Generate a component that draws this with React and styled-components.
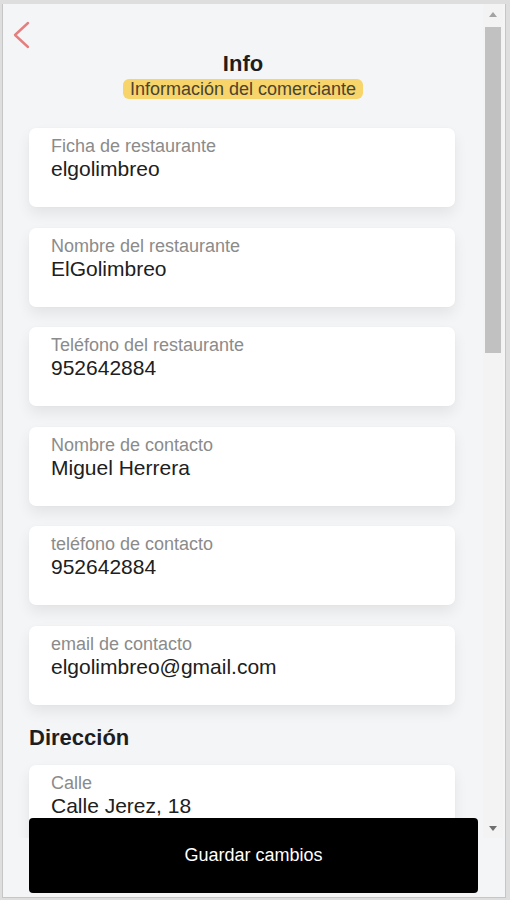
import React from "react";
import styled, { createGlobalStyle } from "styled-components";

const GlobalStyle = createGlobalStyle`
  body {
    margin: 0;
    background: #dedede;
    font-family: "Liberation Sans", Arial, sans-serif;
  }
`;

const Frame = styled.div`
  position: relative;
  box-sizing: border-box;
  margin: 4px 0 0 2px;
  width: 504px;
  height: 894px;
  background: #f4f5f7;
  border: 1px solid #c6c6c6;
  border-top: none;
  overflow: hidden;
`;

const ScrollArea = styled.div`
  display: flex;
  height: 834px;
  padding-right: 2px;
`;

const Content = styled.div`
  flex: 1;
  min-width: 0;
  overflow: hidden;
`;

const BackButton = styled.button`
  display: block;
  margin: 17px 0 0 8px;
  padding: 0;
  border: none;
  background: none;
  cursor: pointer;

  svg {
    display: block;
  }
`;

const Title = styled.h1`
  margin: 0;
  font-size: 22px;
  line-height: 25px;
  font-weight: 700;
  text-align: center;
  color: #1e1e1e;
`;

const BadgeRow = styled.div`
  display: flex;
  justify-content: center;
  margin-top: 3px;
`;

const Badge = styled.span`
  padding: 0 7px;
  font-size: 18px;
  line-height: 20px;
  color: #4b4330;
  background: #f7d56a;
  border-radius: 6px;
`;

const Fields = styled.div`
  margin-top: 29px;
  padding: 0 28px 0 26px;
`;

const Card = styled.div`
  box-sizing: border-box;
  height: 79px;
  margin-bottom: 20.5px;
  padding: 8px 22px 0;
  background: #fff;
  border-radius: 7px;
  box-shadow: 0 7px 14px rgba(0, 0, 0, 0.07), 0 0 2px rgba(0, 0, 0, 0.03);
`;

const Label = styled.div`
  font-size: 18px;
  line-height: 21px;
  color: #8b8b8b;
`;

const Value = styled.div`
  font-size: 21px;
  line-height: 24px;
  color: #202020;
`;

const Section = styled.h2`
  margin: 0 0 15px;
  font-size: 22px;
  line-height: 25px;
  font-weight: 700;
  color: #1e1e1e;
`;

const Scrollbar = styled.div`
  display: flex;
  flex-direction: column;
  width: 20px;
  background: #f3f3f3;
`;

const ScrollButton = styled.div`
  display: flex;
  align-items: center;
  justify-content: center;
  height: 20px;
  margin-top: ${(p) => (p.$down ? "auto" : "0")};
`;

const Thumb = styled.div`
  height: 326px;
  margin: 3px 2px 0;
  background: #c1c1c1;
`;

const SaveButton = styled.button`
  position: absolute;
  left: 26px;
  bottom: 4px;
  width: 449px;
  height: 75px;
  border: none;
  border-radius: 4px;
  background: #000;
  color: #fff;
  font-family: "Liberation Sans", Arial, sans-serif;
  font-size: 18px;
  cursor: pointer;
`;

const fields = [
  { label: "Ficha de restaurante", value: "elgolimbreo" },
  { label: "Nombre del restaurante", value: "ElGolimbreo" },
  { label: "Teléfono del restaurante", value: "952642884" },
  { label: "Nombre de contacto", value: "Miguel Herrera" },
  { label: "teléfono de contacto", value: "952642884" },
  { label: "email de contacto", value: "elgolimbreo@gmail.com" }
];

const Field = ({ label, value }) => (
  <Card>
    <Label>{label}</Label>
    <Value>{value}</Value>
  </Card>
);

const App = () => (
  <>
    <GlobalStyle />
    <Frame>
      <ScrollArea>
        <Content>
          <BackButton aria-label="Volver">
            <svg width="20" height="30" viewBox="0 0 20 30">
              <path
                d="M17 2 L4 14 L17 26"
                fill="none"
                stroke="#e57f7f"
                strokeWidth="2.4"
                strokeLinecap="round"
                strokeLinejoin="round"
              />
            </svg>
          </BackButton>
          <Title>Info</Title>
          <BadgeRow>
            <Badge>Información del comerciante</Badge>
          </BadgeRow>
          <Fields>
            {fields.map((f) => (
              <Field key={f.label} label={f.label} value={f.value} />
            ))}
            <Section>Dirección</Section>
            <Field label="Calle" value="Calle Jerez, 18" />
          </Fields>
        </Content>
        <Scrollbar>
          <ScrollButton>
            <svg width="8" height="5" viewBox="0 0 8 5">
              <path d="M0 5 L4 0 L8 5 Z" fill="#a3a3a3" />
            </svg>
          </ScrollButton>
          <Thumb />
          <ScrollButton $down>
            <svg width="8" height="5" viewBox="0 0 8 5">
              <path d="M0 0 L8 0 L4 5 Z" fill="#6f6f6f" />
            </svg>
          </ScrollButton>
        </Scrollbar>
      </ScrollArea>
      <SaveButton>Guardar cambios</SaveButton>
    </Frame>
  </>
);

export default App;
